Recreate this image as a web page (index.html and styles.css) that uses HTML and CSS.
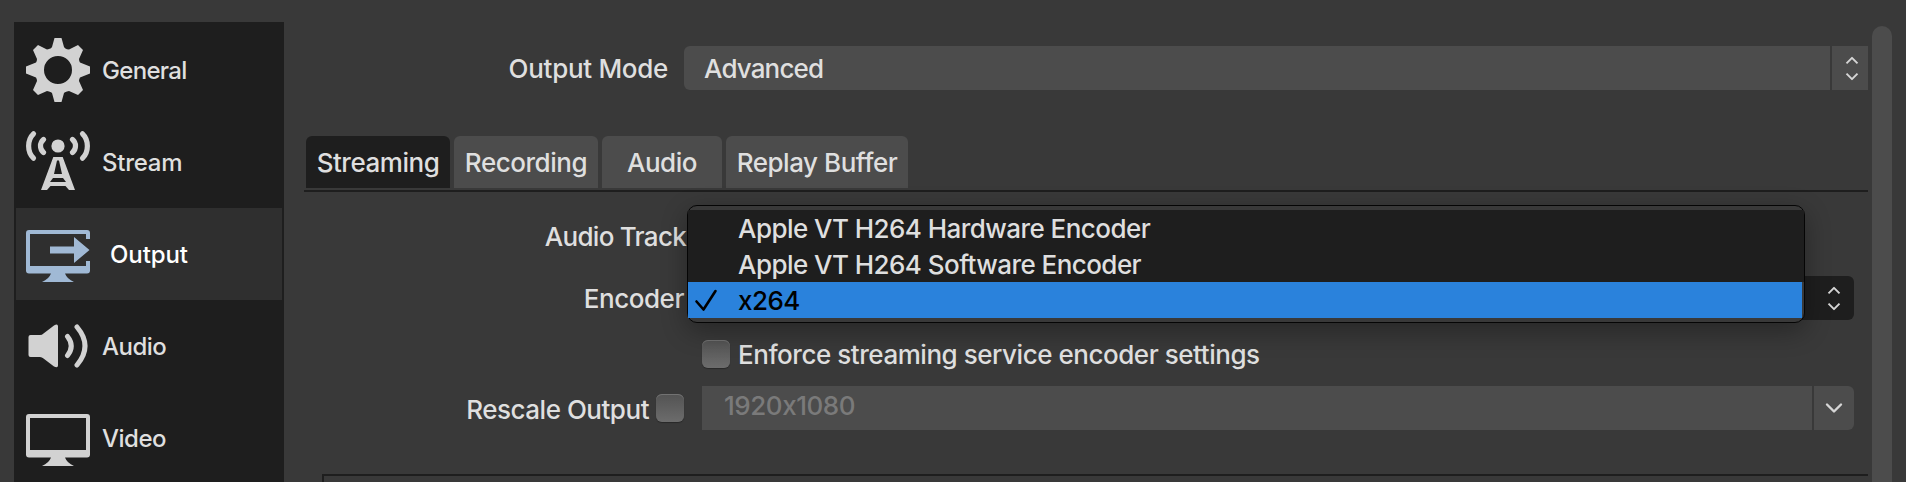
FILE: index.html
```html
<!DOCTYPE html>
<html lang="en">
<head>
<meta charset="utf-8">
<title>Settings</title>
<link rel="stylesheet" href="styles.css">
</head>
<body>
<div class="window">
  <nav class="sidebar">
    <a class="nav-item">
      <svg class="nav-icon" viewBox="0 0 64 64"><path fill="#d2d2d2" fill-rule="evenodd" d="M28.500 0h7L38 9Q38.500 10.300 41 11.200L43 11.500 52 7 57 12 53 21Q53 23 54 24.500L64 28.500v7L54 39.500Q53 41 53 43L57 52 52 57 43 53 41 53.500Q38.500 54 38 55L35.500 64h-7L26 55Q25.500 54 23 53.500L21 53 12 57 7 52 11 43Q11 41 10 39.500L0 35.500v-7L10 24.500Q11 23 11 21L7 12 12 7 21 11.500 23 11Q25.500 10.300 26 9ZM32 18a14 14 0 1 0 0 28a14 14 0 0 0 0-28Z"/></svg>
      <span class="t-general">General</span>
    </a>
    <a class="nav-item">
      <svg class="nav-icon" viewBox="0 0 64 64"><g fill="none" stroke="#d2d2d2" stroke-linecap="round" stroke-width="5.200"><path d="M7.500 3.800C1 10 1 22 7.500 28.200M56.500 3.800C63 10 63 22 56.500 28.200M17.500 9.500C13.500 13 13.500 19 17.500 22.500M46.500 9.500C50.500 13 50.500 19 46.500 22.500"/></g><circle cx="32" cy="16" r="6.600" fill="#d2d2d2"/><path fill="#d2d2d2" fill-rule="evenodd" d="M27.300 27h9.400L49 60h-6L39.500 56h-15L21 60h-6ZM31 30.500 28 44h8L33 30.500ZM27 48 24 52h16L37 48Z"/></svg>
      <span class="t-stream">Stream</span>
    </a>
    <a class="nav-item selected">
      <svg class="nav-icon" viewBox="0 0 64 64"><path fill="#a0b9d5" fill-rule="evenodd" d="M3 8h58a3 3 0 0 1 3 3v6h-4v-5H4v32h56v-5h4v9.500a3 3 0 0 1-3 3H39Q41 57 48 60H16Q23 57 25 51.500H3a3 3 0 0 1-3-3V11a3 3 0 0 1 3-3Z"/><path fill="#a0b9d5" d="M24 24.500h24V15L63.500 28 48 41v-9.500H24Z"/></svg>
      <span class="t-output">Output</span>
    </a>
    <a class="nav-item">
      <svg class="nav-icon" viewBox="0 0 64 64"><path fill="#d2d2d2" d="M4.500 21h9.500Q16 21 17.500 19.500L28 11.500Q32 9 32 12.500v39Q32 54.500 28 52.500L17.500 44.500Q16 43 14 43H4.500a2 2 0 0 1-2-2V23a2 2 0 0 1 2-2Z"/><path d="M41.500 22.500q7.500 9.500 0 19M51 13q16 19 0 38" fill="none" stroke="#d2d2d2" stroke-width="5" stroke-linecap="round"/></svg>
      <span class="t-audio">Audio</span>
    </a>
    <a class="nav-item">
      <svg class="nav-icon" viewBox="0 0 64 64"><path fill="#d2d2d2" fill-rule="evenodd" d="M3 8h58a3 3 0 0 1 3 3v37.500a3 3 0 0 1-3 3H39Q41 57 48 60H16Q23 57 25 51.500H3a3 3 0 0 1-3-3V11a3 3 0 0 1 3-3ZM4 12v32h56V12Z"/></svg>
      <span class="t-video">Video</span>
    </a>
  </nav>

  <main class="content">
    <div class="row mode-row">
      <label class="label mode-label">Output Mode</label>
      <div class="field mode-select"><span class="value">Advanced</span>
        <span class="stepper"><svg class="updown" viewBox="0 0 14 26"><path d="M1.500 8.300 7 2.800l5.500 5.500M1.500 18.700 7 24.200l5.500-5.500"/></svg></span>
      </div>
    </div>
    <div class="tabs">
      <div class="tab wide active">Streaming</div>
      <div class="tab wide">Recording</div>
      <div class="tab audio">Audio</div>
      <div class="tab replay">Replay Buffer</div>
    </div>
    <section class="panel">
      <div class="row track-row"><label class="label track-label">Audio Track</label></div>
      <div class="row encoder-row">
        <label class="label encoder-label">Encoder</label>
        <div class="encoder-select">
          <svg class="updown" viewBox="0 0 14 26"><path d="M1.500 8.300 7 2.800l5.500 5.500M1.500 18.700 7 24.200l5.500-5.500"/></svg>
          <div class="popup">
            <div class="option">Apple VT H264 Hardware Encoder</div>
            <div class="option">Apple VT H264 Software Encoder</div>
            <div class="option current"><svg class="check" viewBox="0 0 24 24"><path d="M2.500 13.500 9.500 21.500 21.500 3"/></svg>x264</div>
          </div>
        </div>
      </div>
      <div class="row enforce-row"><span class="checkbox"></span><span class="enforce-label">Enforce streaming service encoder settings</span></div>
      <div class="row rescale-row">
        <label class="label rescale-label"><span class="rescale-text">Rescale Output</span><span class="checkbox"></span></label>
        <div class="field rescale-field"><span class="value">1920x1080</span>
          <span class="drop"><svg class="chevron" viewBox="0 0 18 12"><path d="M2 2.500 9 9.500l7-7"/></svg></span>
        </div>
      </div>
      <div class="group"></div>
    </section>
  </main>
  <div class="scrollbar"></div>
</div>
</body>
</html>
```
FILE: styles.css
```css
* { box-sizing: border-box; }
body {
  margin: 0;
  background: #393939;
  color: #dfdfdf;
  font: 450 26px/32px Inter, "Liberation Sans", sans-serif;
  font-feature-settings: "calt" 0;
  letter-spacing: -0.46px;
  overflow: hidden;
}
.window { display: flex; width: 1906px; height: 482px; padding-left: 14px; overflow: hidden; }
.sidebar {
  width: 270px;
  height: 460px;
  margin-top: 22px;
  padding: 2px;
  background: #1e1e1e;
  overflow: hidden;
  flex: none;
}
.nav-item { display: flex; align-items: center; height: 92px; padding-left: 10px; gap: 12px; font-size: 24px; letter-spacing: -0.25px; white-space: nowrap; }
.nav-item span { padding-top: 2px; }
.nav-item .t-general { letter-spacing: -0.7px; }
.nav-item .t-audio, .nav-item .t-video { letter-spacing: -0.5px; }
.nav-item.selected { background: #2f2f2f; color: #fff; gap: 20px; letter-spacing: -0.1px; }
.nav-icon { width: 64px; height: 64px; flex: none; }
.content { width: 1584px; flex: none; padding: 46px 0 0 20px; }
.row { display: flex; white-space: nowrap; }
.label { flex: none; text-align: right; }
.mode-row { height: 90px; }
.mode-label { width: 364px; padding-top: 7px; letter-spacing: -0.3px; }
.field { display: flex; height: 44px; }
.field .value { flex: 1; background: #4c4c4c; }
.mode-select { width: 1184px; margin-left: 16px; }
.mode-select .value { padding: 7px 0 0 20px; border-radius: 6px 0 0 6px; letter-spacing: -0.85px; }
.stepper, .drop { display: flex; align-items: center; justify-content: center; margin-left: 2px; background: #4c4c4c; flex: none; }
.stepper { width: 36px; padding-left: 4px; }
.updown { width: 14px; height: 26px; fill: none; stroke: #d6d6d6; stroke-width: 1.9; stroke-linejoin: round; flex: none; }
.tabs { display: flex; gap: 4px; height: 56px; padding-left: 2px; border-bottom: 2px solid #1e1e1e; }
.tab { height: 52px; border-radius: 6px 6px 0 0; background: #4c4c4c; text-align: center; padding-top: 11px; white-space: nowrap; }
.tab.active { background: #1e1e1e; }
.wide { width: 144px; }
.tab.audio { width: 120px; }
.replay { width: 182px; }
.track-row { height: 84px; padding-top: 29px; }
.track-label { width: 382px; letter-spacing: -0.72px; }
.encoder-row { height: 64px; }
.encoder-label { width: 380px; padding-top: 7px; }
.encoder-select {
  position: relative;
  display: flex;
  align-items: center;
  justify-content: flex-end;
  width: 1152px;
  height: 44px;
  margin-left: 18px;
  padding-right: 13px;
  border-radius: 6px;
  background: #1e1e1e;
}
.popup {
  position: absolute;
  left: -15px;
  top: -71px;
  width: 1118px;
  height: 118px;
  padding: 4px 0;
  border: 1px solid #050505;
  border-radius: 10px;
  background: #393939;
  box-shadow: 0 8px 26px rgba(0,0,0,.32);
}
.option { position: relative; height: 36px; padding: 3px 0 0 50px; background: #1e1e1e; letter-spacing: -0.55px; }
.option.current { margin-right: 2px; background: #2a82dc; color: #000; }
.check { position: absolute; left: 6px; top: 6px; width: 24px; height: 24px; fill: none; stroke: #000; stroke-width: 2.6; stroke-linecap: round; stroke-linejoin: round; }
.checkbox { width: 28px; height: 28px; border-radius: 6px; background: linear-gradient(#535353, #6c6c6c); box-shadow: inset 0 1px 0 #727272, 0 1px 1px rgba(0,0,0,.3); flex: none; }
.enforce-row { height: 46px; padding-left: 398px; gap: 8px; }
.enforce-label { margin-top: -1px; }
.rescale-row { height: 88px; }
.rescale-label { display: flex; justify-content: flex-end; width: 380px; gap: 7px; padding-top: 8px; letter-spacing: -0.48px; }
.rescale-field { width: 1152px; margin-left: 18px; }
.rescale-field .value { padding: 4px 0 0 22px; color: #7a7a7a; }
.drop { width: 40px; border-radius: 0 6px 6px 0; }
.chevron { width: 18px; height: 12px; fill: none; stroke: #d6d6d6; stroke-width: 2.4; stroke-linejoin: round; stroke-linecap: round; }
.group { height: 20px; margin-left: 18px; border-top: 2px solid #1e1e1e; border-left: 2px solid #1e1e1e; }
.scrollbar { width: 20px; height: 480px; margin: 26px 0 0 4px; border-radius: 10px; background: #4c4c4c; flex: none; }
```
